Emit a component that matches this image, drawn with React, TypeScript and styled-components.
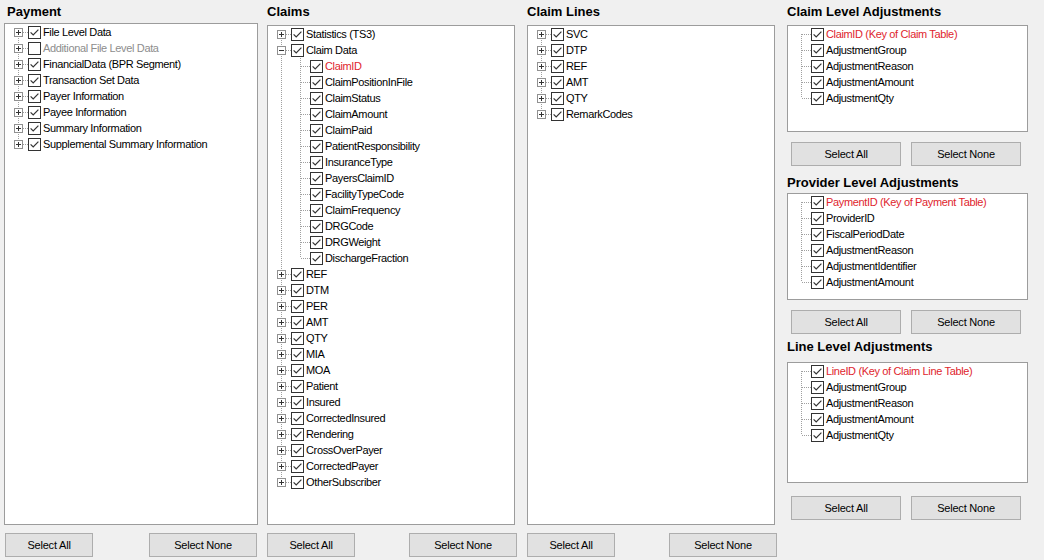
import React from "react";
import styled, { createGlobalStyle } from "styled-components";

type Tone = "red" | "gray";
type Node = {
  label: string;
  checked?: boolean;
  tone?: Tone;
  expandable?: boolean;
  expanded?: boolean;
  children?: Node[];
};

type FlatRow = {
  node: Node;
  guides: boolean[];
  firstRoot: boolean;
  last: boolean;
};

const leaf = (label: string, tone?: Tone): Node => ({ label, checked: true, tone });
const folder = (label: string): Node => ({ label, checked: true, expandable: true });

const paymentTree: Node[] = [
  folder("File Level Data"),
  { label: "Additional File Level Data", checked: false, tone: "gray", expandable: true },
  folder("FinancialData (BPR Segment)"),
  folder("Transaction Set Data"),
  folder("Payer Information"),
  folder("Payee Information"),
  folder("Summary Information"),
  folder("Supplemental Summary Information"),
];

const claimsTree: Node[] = [
  folder("Statistics (TS3)"),
  {
    label: "Claim Data",
    checked: true,
    expandable: true,
    expanded: true,
    children: [
      leaf("ClaimID", "red"),
      leaf("ClaimPositionInFile"),
      leaf("ClaimStatus"),
      leaf("ClaimAmount"),
      leaf("ClaimPaid"),
      leaf("PatientResponsibility"),
      leaf("InsuranceType"),
      leaf("PayersClaimID"),
      leaf("FacilityTypeCode"),
      leaf("ClaimFrequency"),
      leaf("DRGCode"),
      leaf("DRGWeight"),
      leaf("DischargeFraction"),
    ],
  },
  ...[
    "REF", "DTM", "PER", "AMT", "QTY", "MIA", "MOA", "Patient", "Insured",
    "CorrectedInsured", "Rendering", "CrossOverPayer", "CorrectedPayer", "OtherSubscriber",
  ].map(folder),
];

const claimLinesTree: Node[] = ["SVC", "DTP", "REF", "AMT", "QTY", "RemarkCodes"].map(folder);

const claimAdjTree: Node[] = [
  leaf("ClaimID (Key of Claim Table)", "red"),
  leaf("AdjustmentGroup"),
  leaf("AdjustmentReason"),
  leaf("AdjustmentAmount"),
  leaf("AdjustmentQty"),
];

const providerAdjTree: Node[] = [
  leaf("PaymentID (Key of Payment Table)", "red"),
  leaf("ProviderID"),
  leaf("FiscalPeriodDate"),
  leaf("AdjustmentReason"),
  leaf("AdjustmentIdentifier"),
  leaf("AdjustmentAmount"),
];

const lineAdjTree: Node[] = [
  leaf("LineID (Key of Claim Line Table)", "red"),
  leaf("AdjustmentGroup"),
  leaf("AdjustmentReason"),
  leaf("AdjustmentAmount"),
  leaf("AdjustmentQty"),
];

const flatten = (nodes: Node[], guides: boolean[] = []): FlatRow[] =>
  nodes.flatMap((node, i) => {
    const last = i === nodes.length - 1;
    const row: FlatRow = { node, guides, firstRoot: guides.length === 0 && i === 0, last };
    const kids = node.expanded && node.children ? flatten(node.children, [...guides, !last]) : [];
    return [row, ...kids];
  });

const GlobalStyle = createGlobalStyle`
  html, body {
    margin: 0;
    padding: 0;
    background: #f0f0f0;
  }
  body {
    font-family: "Liberation Sans", Arial, sans-serif;
    color: #000;
  }
`;

const Page = styled.div`
  display: flex;
  height: 560px;
  padding-left: 4px;
  box-sizing: border-box;
  background: #f0f0f0;
  overflow: hidden;
`;

const Column = styled.div<{ $w: number; $ml?: number }>`
  display: flex;
  flex-direction: column;
  width: ${(p) => p.$w}px;
  margin-left: ${(p) => p.$ml ?? 0}px;
  padding-bottom: 3px;
  box-sizing: border-box;
  flex-shrink: 0;
`;

const Section = styled.div<{ $mt: number; $grow?: boolean }>`
  display: flex;
  flex-direction: column;
  margin-top: ${(p) => p.$mt}px;
  ${(p) => (p.$grow ? "flex: 1; min-height: 0;" : "")}
`;

const Title = styled.div<{ $gap: number; $indent?: number }>`
  height: 20px;
  line-height: 20px;
  font-size: 13px;
  font-weight: bold;
  margin-bottom: ${(p) => p.$gap}px;
  padding-left: ${(p) => p.$indent ?? 0}px;
  white-space: nowrap;
`;

const TreeBox = styled.div<{ $h?: number }>`
  background: #fff;
  border: 1px solid #9c9c9c;
  box-sizing: border-box;
  padding-left: 4px;
  overflow: hidden;
  ${(p) => (p.$h ? `height: ${p.$h}px;` : "flex: 1;")}
`;

const Row = styled.div`
  display: flex;
  align-items: center;
  height: 16px;
`;

const Cell = styled.svg`
  display: block;
  flex-shrink: 0;
`;

const Check = styled.svg`
  display: block;
  flex-shrink: 0;
`;

const Label = styled.span<{ $tone?: Tone }>`
  margin-left: 2px;
  font-size: 11px;
  letter-spacing: -0.35px;
  line-height: 16px;
  white-space: nowrap;
  color: ${(p) => (p.$tone === "red" ? "#e0252d" : p.$tone === "gray" ? "#8d8d8d" : "#000")};
`;

const ButtonRow = styled.div<{ $mt: number; $split?: boolean; $left?: number; $right?: number }>`
  display: flex;
  justify-content: ${(p) => (p.$split ? "space-between" : "flex-start")};
  gap: 10px;
  margin-top: ${(p) => p.$mt}px;
  margin-left: ${(p) => p.$left ?? 0}px;
  margin-right: ${(p) => p.$right ?? 0}px;
`;

const Button = styled.button<{ $w: number }>`
  width: ${(p) => p.$w}px;
  height: 24px;
  padding: 0;
  background: #e1e1e1;
  border: 1px solid #adadad;
  border-radius: 0;
  font-family: "Liberation Sans", Arial, sans-serif;
  font-size: 11px;
  letter-spacing: -0.2px;
  color: #000;
`;

const DOT = { stroke: "#a0a0a0", strokeWidth: 1, strokeDasharray: "1 1" };

const Connector = ({
  up,
  down,
  across,
  expander,
}: {
  up?: boolean;
  down?: boolean;
  across?: boolean;
  expander?: "plus" | "minus";
}) => (
  <Cell width="19" height="16" viewBox="0 0 19 16" shapeRendering="crispEdges">
    {up && <line x1="9.5" y1="0" x2="9.5" y2="8" {...DOT} />}
    {down && <line x1="9.5" y1="8" x2="9.5" y2="16" {...DOT} />}
    {across && <line x1="10" y1="8.5" x2="19" y2="8.5" {...DOT} />}
    {expander && (
      <g>
        <rect x="5.5" y="4.5" width="8" height="8" fill="#fff" stroke="#919191" />
        <line x1="7" y1="8.5" x2="12" y2="8.5" stroke="#333" />
        {expander === "plus" && <line x1="9.5" y1="6" x2="9.5" y2="11" stroke="#333" />}
      </g>
    )}
  </Cell>
);

const CheckBox = ({ checked }: { checked?: boolean }) => (
  <Check width="13" height="13" viewBox="0 0 13 13">
    <rect x="0.5" y="0.5" width="12" height="12" fill="#fff" stroke="#333" shapeRendering="crispEdges" />
    {checked && (
      <polyline points="2.6,6.4 5.2,9 10.4,3.6" fill="none" stroke="#333" strokeWidth="1.2" />
    )}
  </Check>
);

const Tree = ({ nodes, h }: { nodes: Node[]; h?: number }) => (
  <TreeBox $h={h}>
    {flatten(nodes).map(({ node, guides, firstRoot, last }, i) => (
      <Row key={i}>
        {guides.map((g, k) => (
          <Connector key={k} up={g} down={g} />
        ))}
        <Connector
          up={!firstRoot}
          down={!last}
          across
          expander={node.expandable ? (node.expanded ? "minus" : "plus") : undefined}
        />
        <CheckBox checked={node.checked} />
        <Label $tone={node.tone}>{node.label}</Label>
      </Row>
    ))}
  </TreeBox>
);

const SideButtons = ({ mt }: { mt: number }) => (
  <ButtonRow $mt={mt} $left={4}>
    <Button $w={110}>Select All</Button>
    <Button $w={110}>Select None</Button>
  </ButtonRow>
);

const MainPanel = ({
  title,
  nodes,
  w,
  ml,
  gap,
  indent,
  btnLeft,
  btnRight,
}: {
  title: string;
  nodes: Node[];
  w: number;
  ml?: number;
  gap: number;
  indent?: number;
  btnLeft?: number;
  btnRight?: number;
}) => (
  <Column $w={w} $ml={ml}>
    <Section $mt={2} $grow>
      <Title $gap={gap} $indent={indent}>
        {title}
      </Title>
      <Tree nodes={nodes} />
    </Section>
    <ButtonRow $mt={8} $split $left={btnLeft} $right={btnRight}>
      <Button $w={88}>Select All</Button>
      <Button $w={108}>Select None</Button>
    </ButtonRow>
  </Column>
);

export default function App() {
  return (
    <>
      <GlobalStyle />
      <Page>
        <MainPanel title="Payment" nodes={paymentTree} w={254} gap={1} indent={3} btnLeft={1} btnRight={1} />
        <MainPanel title="Claims" nodes={claimsTree} w={248} ml={9} gap={3} btnRight={-2} />
        <MainPanel title="Claim Lines" nodes={claimLinesTree} w={248} ml={12} gap={3} btnRight={-2} />
        <Column $w={241} $ml={12}>
          <Section $mt={2}>
            <Title $gap={3}>Claim Level Adjustments</Title>
            <Tree nodes={claimAdjTree} h={107} />
            <SideButtons mt={10} />
          </Section>
          <Section $mt={7}>
            <Title $gap={0}>Provider Level Adjustments</Title>
            <Tree nodes={providerAdjTree} h={107} />
            <SideButtons mt={10} />
          </Section>
          <Section $mt={3}>
            <Title $gap={5}>Line Level Adjustments</Title>
            <Tree nodes={lineAdjTree} h={121} />
            <SideButtons mt={13} />
          </Section>
        </Column>
      </Page>
    </>
  );
}
